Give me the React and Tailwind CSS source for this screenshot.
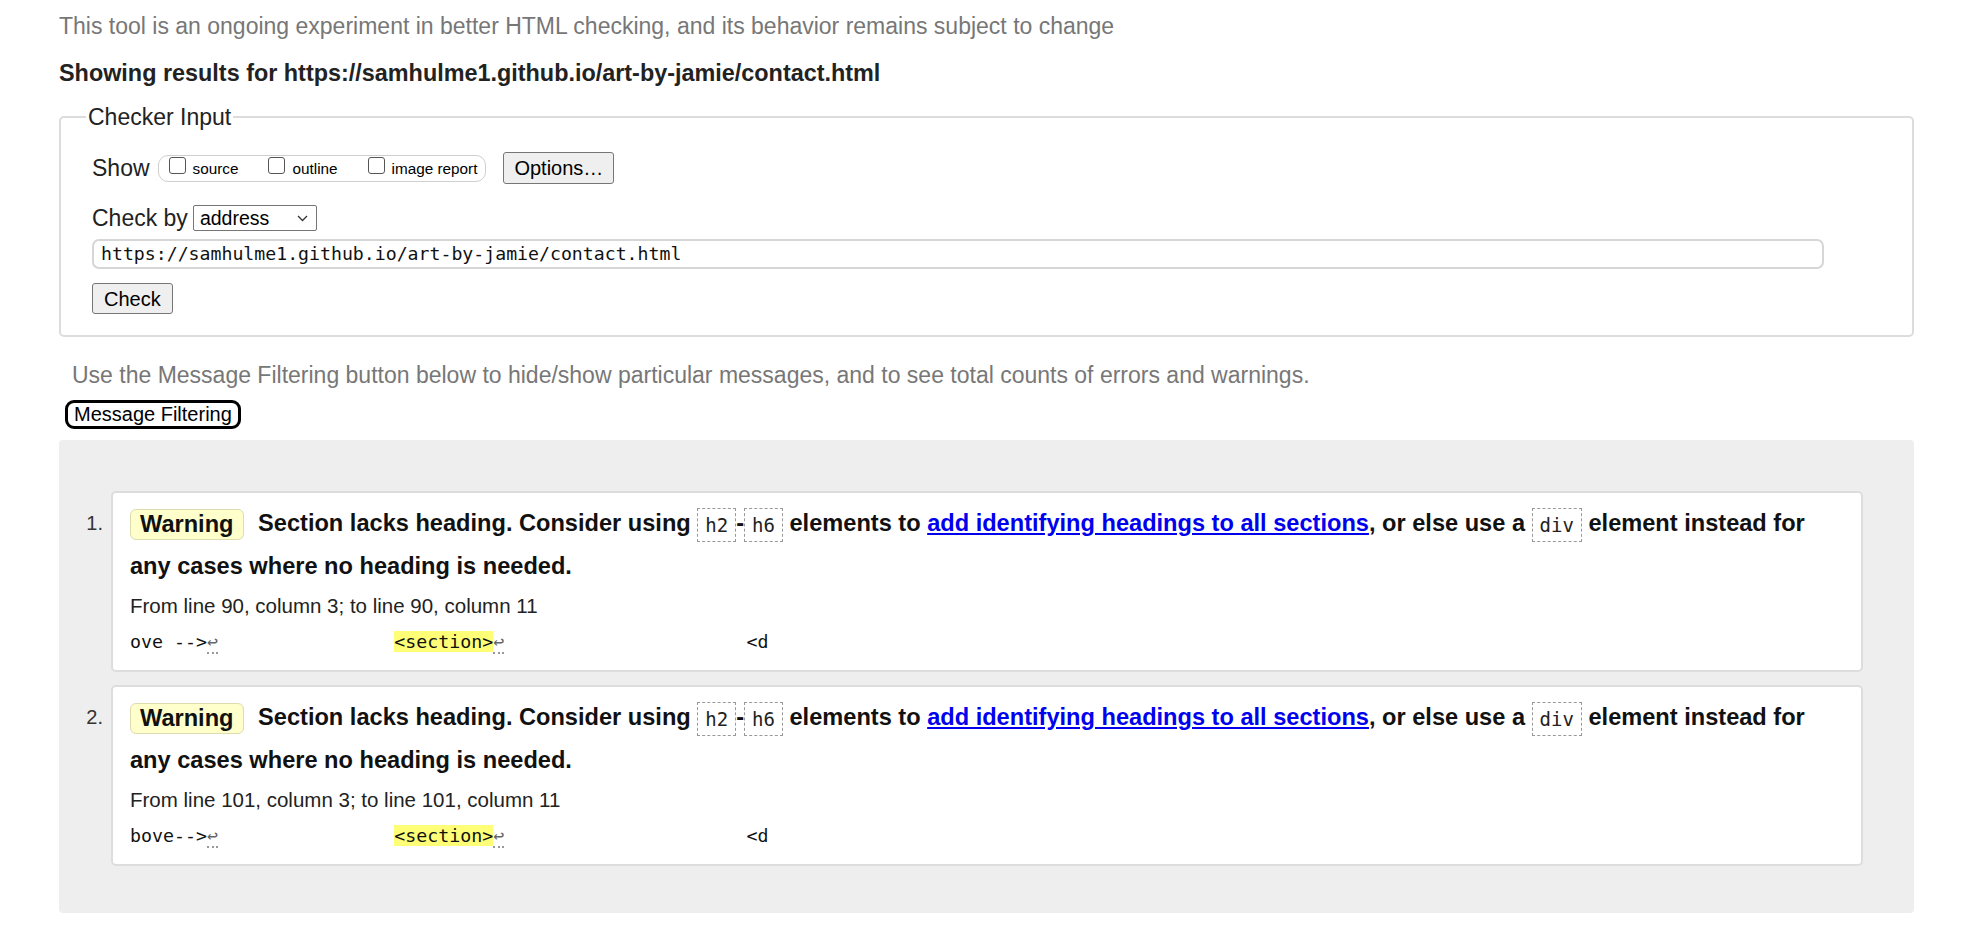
import React from "react";

const sans = "font-['Liberation_Sans',Arial,Helvetica,sans-serif]";
const mono = "font-['DejaVu_Sans_Mono','Liberation_Mono',monospace]";

const Chip = ({ children }) => (
  <code
    className={`${mono} inline-block align-middle border border-dashed border-[#999] px-[7px] text-[19px] leading-[32px] font-normal text-[#222]`}
  >
    {children}
  </code>
);

// line feed marker in the extract
const Lf = () => (
  <span className="border-b-2 border-dotted border-[#999] text-[#666]">↩</span>
);

const Checkbox = ({ label }) => (
  <label className="flex items-center gap-[7px]">
    <input
      type="checkbox"
      className="appearance-none w-[17px] h-[17px] mb-[6px] border border-[#555] rounded-[3px] bg-white"
    />
    <span className="text-[15.3px] leading-[17px]">{label}</span>
  </label>
);

const Message = ({ n, from, lead }) => (
  <li className="flex">
    <span className="w-[52px] shrink-0 pr-[8px] pt-[11px] text-right text-[20px] leading-[43px] text-[#333]">
      {n}.
    </span>
    <div className="flex-1 bg-white border-2 border-[#dddddd] rounded-[5px] pl-[17px] pr-[30px] pt-[9px] pb-[16px]">
      <p className="text-[23.6px] font-bold leading-[43px] text-[#111]">
        <span className="inline-block align-middle bg-[#ffffcc] border border-[#dcdcb0] rounded-[6px] px-[9px] leading-[29px] mr-[8px]">
          Warning
        </span>{" "}
        Section lacks heading. Consider using <Chip>h2</Chip>-<Chip>h6</Chip> elements to{" "}
        <a href="#" className="text-[#0000ee] underline">
          add identifying headings to all sections
        </a>
        , or else use a <Chip>div</Chip> element instead for any cases where no heading is needed.
      </p>
      <p className="mt-[6px] text-[20.5px] leading-[24px] text-[#222]">{from}</p>
      <p className={`${mono} mt-[12px] text-[18.3px] leading-[24px] whitespace-pre text-[#111]`}>
        {lead}
        <Lf />
        {"                "}
        <span className="bg-[#ffff77]">{"<section>"}</span>
        <Lf />
        {"                      "}
        {"<d"}
      </p>
    </div>
  </li>
);

export default function App() {
  return (
    <div className={`${sans} min-h-[938px] bg-white pl-[59px] pr-[58px] pt-[12px] text-black`}>
      <p className="text-[23px] leading-[28px] text-[#777]">
        This tool is an ongoing experiment in better HTML checking, and its behavior remains subject to change
      </p>
      <p className="mt-[19px] text-[23.4px] leading-[28px] font-bold text-[#222]">
        Showing results for https://samhulme1.github.io/art-by-jamie/contact.html
      </p>

      <fieldset className="mt-[16px] border-2 border-[#dcdcdc] rounded-[5px] px-[31px] pb-[21px]">
        <legend className="-ml-[6px] px-[2px] text-[23px] leading-[28px] text-[#222]">Checker Input</legend>

        <div className="mt-[21px] flex items-center">
          <span className="text-[23px] leading-[28px] text-[#222]">Show</span>
          <div className="ml-[8px] flex items-center gap-[30px] h-[27px] pl-[10px] pr-[8px] border border-[#cfcfcf] rounded-[10px]">
            <Checkbox label="source" />
            <Checkbox label="outline" />
            <Checkbox label="image report" />
          </div>
          <button className="ml-[17px] h-[32px] px-[10px] bg-[#efefef] border border-[#767676] rounded-[3px] text-[20px] text-black">
            Options…
          </button>
        </div>

        <div className="mt-[20px] flex items-center">
          <span className="text-[23px] leading-[28px] text-[#222]">Check by</span>
          <div className="ml-[5px] w-[124px] h-[26px] flex items-center justify-between pl-[6px] pr-[8px] border border-[#767676] rounded-[2px] bg-white">
            <span className="text-[19.5px] leading-[22px]">address</span>
            <svg width="11" height="7" viewBox="0 0 11 7" fill="none">
              <polyline points="1,1 5.5,5.5 10,1" stroke="#333" strokeWidth="1.3" />
            </svg>
          </div>
        </div>

        <div
          className={`${mono} mt-[7px] w-[1732px] h-[30px] flex items-center px-[7px] border-2 border-[#d6d6d6] rounded-[7px] text-[18.2px] text-[#111]`}
        >
          https://samhulme1.github.io/art-by-jamie/contact.html
        </div>

        <button className="mt-[14px] h-[31px] px-[11px] bg-[#efefef] border border-[#767676] rounded-[3px] text-[20px] text-black">
          Check
        </button>
      </fieldset>

      <p className="mt-[24px] ml-[13px] text-[23px] leading-[28px] text-[#777]">
        Use the Message Filtering button below to hide/show particular messages, and to see total counts of errors and warnings.
      </p>
      <button className="mt-[11px] ml-[6px] border-[3px] border-black rounded-[9px] px-[6px] text-[20px] leading-[23px] text-black bg-white">
        Message Filtering
      </button>

      <div className="mt-[11px] bg-[#eeeeee] rounded-[4px] pt-[51px] pb-[47px] pr-[51px]">
        <ol className="flex flex-col gap-[13px]">
          <Message n={1} from="From line 90, column 3; to line 90, column 11" lead="ove -->" />
          <Message n={2} from="From line 101, column 3; to line 101, column 11" lead="bove-->" />
        </ol>
      </div>
    </div>
  );
}
